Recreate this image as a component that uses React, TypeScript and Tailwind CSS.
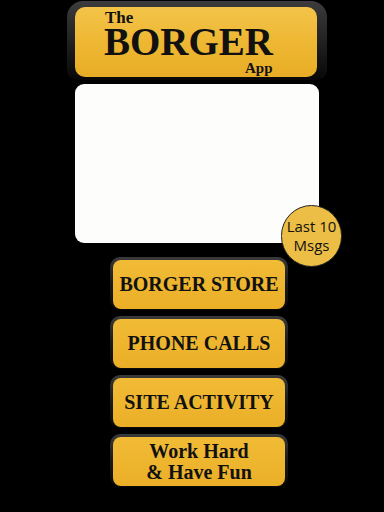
import React from 'react';

const serif = { fontFamily: '"Liberation Serif", "Times New Roman", serif' };

const MenuButton: React.FC<{ lines: string[] }> = ({ lines }) => (
  <div className="w-[178px] h-[53px] rounded-[10px] bg-gradient-to-b from-[#3a3a3a] via-[#1a1a1a] to-[#0a0a0a] pl-[3px] pr-[3px] pt-[3px] pb-[1px]">
    <div className="h-full rounded-[8px] bg-gradient-to-b from-[#f1bb36] to-[#ebaf27] flex flex-col items-center justify-center text-[#111] font-bold text-[20px] leading-[21px]" style={serif}>
      {lines.map(l => <span key={l}>{l}</span>)}
    </div>
  </div>
);

const App: React.FC = () => {
  return (
    <div className="w-[384px] h-[512px] bg-black overflow-hidden flex flex-col">
      {/* header */}
      <div className="ml-[67px] mt-[1px] w-[260px] h-[79px] rounded-t-[16px] rounded-b-[10px] bg-gradient-to-b from-[#3c3c3c] via-[#222] to-[#080808] pl-[8px] pr-[10px] pt-[6px] pb-[3px]">
        <div className="relative h-full rounded-[10px] bg-gradient-to-b from-[#f3c449] via-[#eeb733] to-[#e8ad25] text-[#111] font-bold" style={serif}>
          <span className="absolute left-[30px] top-[4px] text-[17px] leading-[14px]">The</span>
          <span className="absolute left-[29px] top-[21px] text-[39px] leading-[28px]">BORGER</span>
          <span className="absolute left-[170px] top-[55px] text-[15px] leading-[12px]">App</span>
        </div>
      </div>

      {/* message panel */}
      <div className="relative ml-[75px] mt-[4px] w-[244px] h-[159px]">
        <div className="w-full h-full rounded-[9px] bg-[#fdfefc]" />
        <div className="absolute left-[206px] top-[121px] w-[61px] h-[62px] rounded-full border border-[#222] bg-[#ecbe45] flex flex-col items-center justify-center text-[#111] text-[15px] leading-[19px]" style={{ fontFamily: '"Open Sans", "Noto Sans", sans-serif' }}>
          <span>Last 10</span>
          <span>Msgs</span>
        </div>
      </div>

      {/* menu */}
      <div className="ml-[110px] mt-[14px] flex flex-col gap-[6px]">
        <MenuButton lines={['BORGER STORE']} />
        <MenuButton lines={['PHONE CALLS']} />
        <MenuButton lines={['SITE ACTIVITY']} />
        <MenuButton lines={['Work Hard', '& Have Fun']} />
      </div>
    </div>
  );
};

export default App;
